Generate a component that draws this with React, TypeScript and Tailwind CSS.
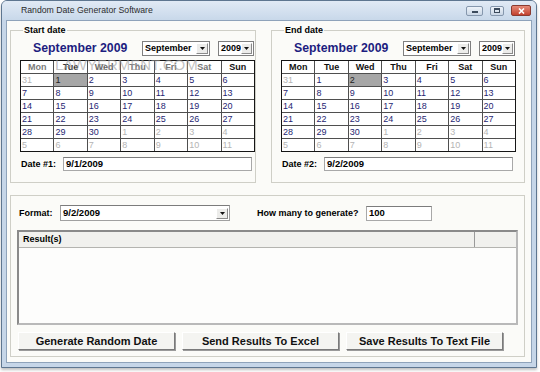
const DAYS: [number, boolean][] = [
  [31, true],
  ...Array.from({ length: 30 }, (_, i) => [i + 1, false] as [number, boolean]),
  ...Array.from({ length: 11 }, (_, i) => [i + 1, true] as [number, boolean]),
];

const HEAD = ["Mon", "Tue", "Wed", "Thu", "Fri", "Sat", "Sun"];

function DropArrow() {
  return (
    <span className="w-[12px] h-[11px] mr-[1px] flex items-center justify-center bg-[#ececea] border border-t-white border-l-white border-r-[#8a8a8a] border-b-[#8a8a8a]">
      <svg width="5" height="3" viewBox="0 0 5 3">
        <path d="M0 0H5L2.5 3Z" fill="#111" />
      </svg>
    </span>
  );
}

function Calendar({ selected, faded }: { selected: number; faded?: boolean }) {
  const headColors = faded
    ? ["text-[#7a7a7a]", "text-[#333]", "text-[#666]", "text-[#777]", "text-[#777]", "text-[#777]", "text-[#111]"]
    : ["text-[#111]", "text-[#111]", "text-[#111]", "text-[#111]", "text-[#111]", "text-[#111]", "text-[#111]"];
  return (
    <div className="relative w-[235px]">
      <div className="grid grid-cols-7 gap-px bg-[#4f4f4f] border border-[#151515]">
        {HEAD.map((h, i) => (
          <div key={h} className={`h-[12px] bg-white flex items-center justify-center text-[9px] font-bold leading-none ${headColors[i]}`}>
            {h}
          </div>
        ))}
        {DAYS.map(([n, out], i) => {
          const sel = !out && n === selected;
          return (
            <div
              key={i}
              className={`h-[12px] flex items-center pl-[1px] text-[9px] leading-none ${
                sel ? "bg-[#a6a6a6] text-[#222]" : out ? "bg-white text-[#b4b4b4]" : "bg-white text-[#1f1f73]"
              }`}
            >
              {n}
            </div>
          );
        })}
      </div>
      {faded && (
        <span className="absolute left-[35px] top-[-3px] text-[15px] leading-none text-[#9a9a9a]/60 pointer-events-none">
          LAWYERMENT.COM
        </span>
      )}
    </div>
  );
}

function DateGroup({
  title,
  label,
  value,
  selected,
  faded,
  width,
}: {
  title: string;
  label: string;
  value: string;
  selected: number;
  faded?: boolean;
  width: string;
}) {
  return (
    <fieldset className={`border border-[#cfcfc7] h-[159px] pl-[9px] ${width}`}>
      <legend className="ml-[3px] px-[1px] text-[9px] font-bold leading-[13px] text-black">{title}</legend>
      <div className="mt-[4px] flex items-center h-[15px]">
        <div className="w-[122px] pl-[13px] text-[12.3px] font-bold text-[#1d1d80] leading-none">September 2009</div>
        <div className="w-[68px] h-[15px] flex items-center border border-[#7f7f7f] bg-white">
          <span className="flex-1 pl-[2px] text-[9px] font-bold leading-none">September</span>
          <DropArrow />
        </div>
        <div className="ml-[8px] w-[36px] h-[15px] flex items-center border border-[#7f7f7f] bg-white">
          <span className="flex-1 pl-[2px] text-[9px] font-bold leading-none">2009</span>
          <DropArrow />
        </div>
      </div>
      <div className="mt-[4px]">
        <Calendar selected={selected} faded={faded} />
      </div>
      <div className="mt-[5px] flex items-center h-[14px]">
        <span className="w-[43px] pl-[1px] text-[9px] font-bold leading-none">{label}</span>
        <div className="w-[189px] h-[14px] flex items-center border border-[#a8a8a8] border-t-[#7c7c7c] bg-white pl-[2px] text-[9.5px] font-bold leading-none">
          {value}
        </div>
      </div>
    </fieldset>
  );
}

export default function App() {
  return (
    <div className="w-[540px] h-[372px] bg-white overflow-hidden font-['Liberation_Sans',Arial,sans-serif] text-black">
      <div className="ml-[1px] w-[536px] h-[368px] rounded-t-[6px] border border-[#5e7690] bg-[#c6d6e8] flex flex-col shadow-[0_2px_3px_rgba(0,0,0,0.25)]">
        {/* title bar */}
        <div className="h-[19px] flex items-center rounded-t-[5px] bg-linear-to-b from-[#e1eaf5] to-[#c8d8ea]">
          <span className="ml-[19px] text-[8.7px] text-[#2c2c2c] leading-none">Random Date Generator Software</span>
          <div className="ml-auto flex items-center gap-[7px] mr-[5px]">
            <div className="w-[17px] h-[10px] rounded-[2px] border border-[#8597ad] bg-linear-to-b from-[#eef3f9] to-[#c9d6e5] flex items-end justify-center pb-[2px]">
              <div className="w-[6px] h-[2px] bg-[#3b4a5c]" />
            </div>
            <div className="w-[14px] h-[10px] rounded-[2px] border border-[#8597ad] bg-linear-to-b from-[#eef3f9] to-[#c9d6e5] flex items-center justify-center">
              <div className="w-[6px] h-[5px] border border-[#3b4a5c] border-t-2" />
            </div>
            <div className="w-[20px] h-[11px] rounded-[2px] border border-[#8a3b30] bg-linear-to-b from-[#e58a78] to-[#c2402e] flex items-center justify-center">
              <svg width="7" height="6" viewBox="0 0 7 6">
                <path d="M1 0.5L6 5.5M6 0.5L1 5.5" stroke="#fff" strokeWidth="1.6" />
              </svg>
            </div>
          </div>
        </div>

        {/* client area */}
        <div className="flex-1 mx-[4px] mb-[4px] border border-[#8fa3ba] bg-[#fbfbf8] pl-[3px] pt-[3px]">
          <div className="flex gap-[15px]">
            <DateGroup title="Start date" label="Date #1:" value="9/1/2009" selected={1} faded width="w-[246px]" />
            <DateGroup title="End date" label="Date #2:" value="9/2/2009" selected={2} width="w-[254px]" />
          </div>

          <div className="mt-[12px] w-[515px] h-[162px] border border-[#cfcfc7] px-[6px] pt-[9px]">
            <div className="flex items-center h-[16px] pl-[2px]">
              <span className="w-[41px] text-[9px] font-bold leading-none">Format:</span>
              <div className="w-[170px] h-[16px] flex items-center border border-[#a0a0a0] border-t-[#7c7c7c] bg-white">
                <span className="flex-1 pl-[2px] text-[9.5px] font-bold leading-none">9/2/2009</span>
                <DropArrow />
              </div>
              <span className="ml-[27px] w-[109px] text-[9px] font-bold leading-none">How many to generate?</span>
              <div className="w-[66px] h-[15px] flex items-center border border-[#a8a8a8] border-t-[#7c7c7c] bg-white pl-[2px] text-[9.5px] font-bold leading-none">
                100
              </div>
            </div>

            <div className="mt-[9px] w-[501px] h-[95px] border-2 border-t-[#8a8a8a] border-l-[#8a8a8a] border-r-[#b9b9b9] border-b-[#b9b9b9] bg-[#fdfdfc]">
              <div className="flex h-[16px] bg-[#f1f1ee] border-b border-[#b4b4b0]">
                <div className="w-[456px] flex items-center pl-[4px] text-[9px] font-bold leading-none border-r border-[#9a9a9a]">
                  Result(s)
                </div>
                <div className="flex-1" />
              </div>
            </div>

            <div className="mt-[7px] flex gap-[7px] pl-[1px]">
              {["Generate Random Date", "Send Results To Excel", "Save Results To Text File"].map((t) => (
                <button
                  key={t}
                  className="w-[157px] h-[18px] flex items-center justify-center bg-[#f4f4f1] border border-t-white border-l-white border-r-[#7a7a7a] border-b-[#7a7a7a] shadow-[1px_1px_0_#9a9a9a] text-[11px] font-bold leading-none text-[#111]"
                >
                  {t}
                </button>
              ))}
            </div>
          </div>
        </div>
      </div>
    </div>
  );
}
